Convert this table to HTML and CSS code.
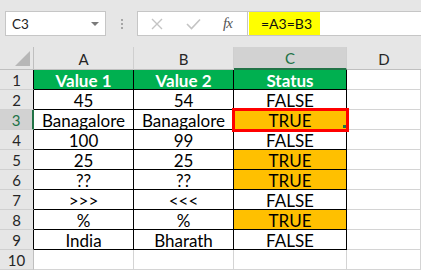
FILE: index.html
```html
<!DOCTYPE html>
<html lang="en">
<head>
<meta charset="utf-8">
<title>Excel comparison</title>
<link rel="stylesheet" href="styles.css">
</head>
<body>
<div class="app">
  <div class="toolbar">
    <div class="namebox">
      <span class="ref">C3</span>
      <svg class="caret" width="8" height="5" viewBox="0 0 8 5"><polygon points="0,0 8,0 4,4" fill="#7a7a7a"/></svg>
    </div>
    <div class="grip"><i></i><i></i><i></i></div>
    <div class="fbar">
      <div class="fbtns">
        <svg class="ico" width="12" height="12" viewBox="0 0 12 12"><path d="M1 1 L11 11 M11 1 L1 11" stroke="#c4c4c4" stroke-width="1.4" fill="none"/></svg>
        <svg class="ico chk" width="15" height="12" viewBox="0 0 15 12"><path d="M1 6 L5.5 10.5 L14 1.5" stroke="#c4c4c4" stroke-width="1.6" fill="none"/></svg>
        <span class="fx">fx</span>
      </div>
      <div class="finput"><span class="hl">=A3=B3</span></div>
    </div>
  </div>
  <div class="sheet">
    <div class="cell corner"><svg width="15" height="15" viewBox="0 0 15 15"><polygon points="15,0 15,15 0,15" fill="#b7b7b7"/></svg></div>
    <div class="cell colh">A</div>
    <div class="cell colh">B</div>
    <div class="cell colh sel">C</div>
    <div class="cell colh last">D</div>

    <div class="cell rowh dr">1</div>
    <div class="cell d head">Value 1</div>
    <div class="cell d head">Value 2</div>
    <div class="cell d head">Status</div>
    <div class="cell e"></div>

    <div class="cell rowh dr">2</div>
    <div class="cell d">45</div>
    <div class="cell d">54</div>
    <div class="cell d">FALSE</div>
    <div class="cell e"></div>

    <div class="cell rowh dr selr">3</div>
    <div class="cell d">Banagalore</div>
    <div class="cell d">Banagalore</div>
    <div class="cell d t active">TRUE<span class="frame"></span><span class="handle"></span></div>
    <div class="cell e"></div>

    <div class="cell rowh dr">4</div>
    <div class="cell d">100</div>
    <div class="cell d">99</div>
    <div class="cell d">FALSE</div>
    <div class="cell e"></div>

    <div class="cell rowh dr">5</div>
    <div class="cell d">25</div>
    <div class="cell d">25</div>
    <div class="cell d t">TRUE</div>
    <div class="cell e"></div>

    <div class="cell rowh dr">6</div>
    <div class="cell d">??</div>
    <div class="cell d">??</div>
    <div class="cell d t">TRUE</div>
    <div class="cell e"></div>

    <div class="cell rowh dr">7</div>
    <div class="cell d">&gt;&gt;&gt;</div>
    <div class="cell d">&lt;&lt;&lt;</div>
    <div class="cell d">FALSE</div>
    <div class="cell e"></div>

    <div class="cell rowh dr">8</div>
    <div class="cell d">%</div>
    <div class="cell d">%</div>
    <div class="cell d t">TRUE</div>
    <div class="cell e"></div>

    <div class="cell rowh dr">9</div>
    <div class="cell d">India</div>
    <div class="cell d">Bharath</div>
    <div class="cell d">FALSE</div>
    <div class="cell e"></div>

    <div class="cell rowh">10</div>
    <div class="cell e"></div>
    <div class="cell e"></div>
    <div class="cell e"></div>
    <div class="cell e"></div>
  </div>
</div>
</body>
</html>
```
FILE: styles.css
```css
* { box-sizing: border-box; }
html, body { margin: 0; padding: 0; }
body {
  width: 421px;
  height: 271px;
  overflow: hidden;
  background: #e6e6e6;
  font-family: Lato, "Liberation Sans", sans-serif;
}
.app { width: 421px; }

.toolbar {
  height: 47px;
  display: flex;
  align-items: flex-start;
  padding: 11px 0 0 5px;
  background: #e6e6e6;
}
.namebox {
  width: 101px;
  height: 25px;
  background: #fff;
  border: 1px solid #c6c6c6;
  display: flex;
  align-items: center;
  justify-content: space-between;
  padding: 0 6px 0 6px;
}
.ref { font-size: 13.5px; color: #222; }
.caret { margin-top: 1px; }
.grip {
  width: 31px;
  height: 25px;
  display: flex;
  flex-direction: column;
  align-items: center;
  justify-content: center;
  gap: 2px;
}
.grip i {
  display: block;
  width: 2px;
  height: 2px;
  background: #a6a6a6;
}
.fbar {
  flex: 1;
  height: 25px;
  display: flex;
  background: #fff;
  border: 1px solid #c6c6c6;
  border-right: none;
}
.fbtns {
  width: 110px;
  display: flex;
  align-items: center;
  padding-left: 13px;
  border-right: 1px solid #c6c6c6;
}
.chk { margin-left: 23px; }
.fx {
  margin-left: 22px;
  font-family: "Liberation Serif", serif;
  font-style: italic;
  font-size: 15px;
  color: #555;
  letter-spacing: -1px;
}
.finput {
  flex: 1;
  padding-left: 1px;
  display: flex;
}
.hl {
  width: 71px;
  height: 100%;
  background: #ffff00;
  padding-left: 12px;
  font-size: 14px;
  color: #111;
  display: flex;
  align-items: center;
}

.sheet {
  display: grid;
  grid-template-columns: 34px 100px 100px 113px 74px;
  grid-template-rows: 23px repeat(10, 20px) 2px;
  background: #fff;
}
.cell {
  display: flex;
  align-items: center;
  justify-content: center;
  border-right: 1px solid #d4d4d4;
  border-bottom: 1px solid #d4d4d4;
  font-size: 17px;
  color: #000;
  padding-top: 1px;
}
.corner {
  background: #e6e6e6;
  border-right: 1px solid #bfbfbf;
  border-bottom: 1px solid #bfbfbf;
  align-items: flex-end;
  justify-content: flex-end;
  padding: 0 3px 3px 0;
}
.colh {
  background: #e6e6e6;
  border-right: 1px solid #cfcfcf;
  border-bottom: 1px solid #bfbfbf;
  font-size: 15px;
  color: #262626;
}
.colh.sel {
  background: #d2d2d2;
  color: #217346;
  border-bottom: 2px solid #217346;
}
.colh.last { border-right: none; }
.rowh {
  background: #e6e6e6;
  border-right: 1px solid #bfbfbf;
  border-bottom: 1px solid #d0d0d0;
  font-size: 15px;
  color: #262626;
}
.rowh.dr { border-right-color: #000; }
.rowh.selr {
  background: #d2d2d2;
  color: #217346;
  border-right: 2px solid #217346;
}
.d {
  border-right-color: #000;
  border-bottom-color: #000;
}
.head {
  background: #00b050;
  color: #fff;
  font-weight: 700;
}
.t { background: #ffc000; }
.active { position: relative; }
.frame {
  position: absolute;
  left: -2px;
  top: -2px;
  right: -3px;
  bottom: -3px;
  border: 3px solid #ff0000;
}
.handle {
  position: absolute;
  right: 0;
  bottom: 1px;
  width: 3px;
  height: 3px;
  background: #217346;
}
.e { }
```
